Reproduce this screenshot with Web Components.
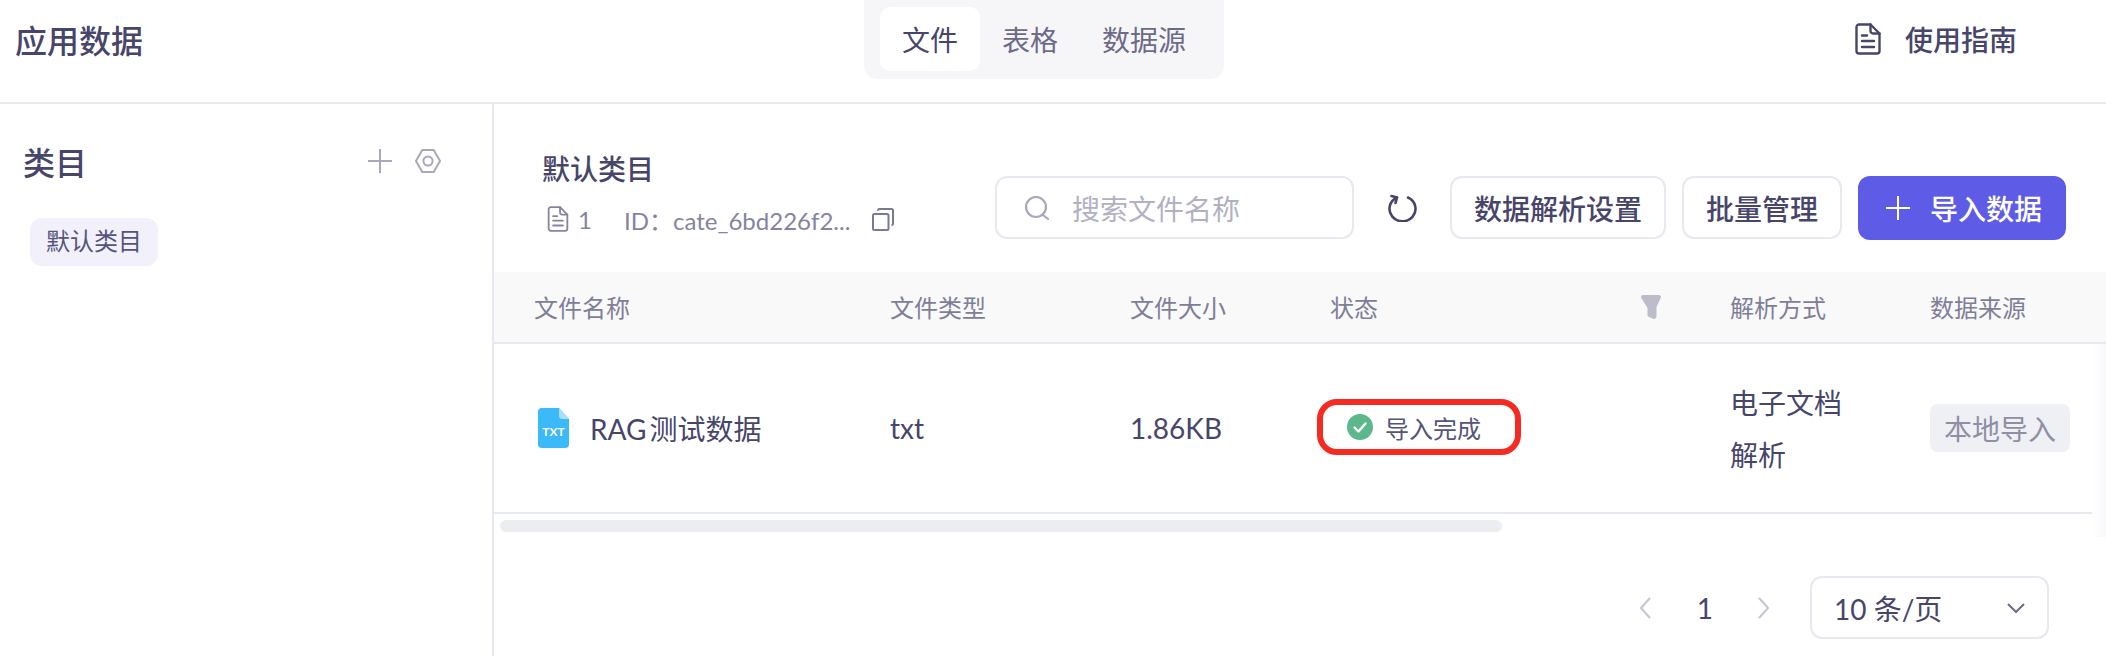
<!DOCTYPE html>
<html lang="zh"><head><meta charset="utf-8"><title>应用数据</title>
<style>
html,body{margin:0;padding:0;background:#fff;}
body{width:2106px;height:656px;overflow:hidden;font-family:Lato,"Noto Sans CJK SC",sans-serif;color:#47466a;}
</style></head><body>
<app-page></app-page>
<script>
const FONT='Lato,"Noto Sans CJK SC",sans-serif';
const docIcon=(w,h,c,sw)=>`<svg width="${w}" height="${h}" viewBox="0 0 26 32" fill="none" stroke="${c}" stroke-width="${sw}" stroke-linejoin="round" stroke-linecap="round"><path d="M4 1.5h11.5L24.5 10.5V28a2.5 2.5 0 0 1-2.5 2.5H4A2.5 2.5 0 0 1 1.5 28V4A2.5 2.5 0 0 1 4 1.5Z"/><path d="M15.5 1.5V8a2.5 2.5 0 0 0 2.5 2.5h6.5"/><path d="M7 12.5h5M7 18h12M7 24h12"/></svg>`;
const plusIcon=(c)=>`<svg width="24" height="24" viewBox="0 0 24 24" stroke="${c}" stroke-width="2" fill="none"><path d="M12 0v24M0 12h24"/></svg>`;
function def(name,html){
  customElements.define(name,class extends HTMLElement{
    constructor(){super();const r=this.attachShadow({mode:'open'});r.innerHTML=html;}
  });
}
def('seg-tabs',`<style>
:host{display:flex;height:79px;box-sizing:border-box;padding:7px 16px 8px;background:#f6f6f9;border-radius:0 0 14px 14px;font-size:28px;color:#6b6a88;}
span{display:flex;align-items:center;padding:0 22px;height:64px;}
.on{background:#fff;border-radius:10px;color:#47466a;}
</style><span class="on">文件</span><span>表格</span><span>数据源</span>`);
def('app-header',`<style>
:host{display:grid;grid-template-columns:864px 360px 1fr;height:102px;border-bottom:2px solid #e8e8f0;}
h1{margin:0;padding-left:15px;font-size:32px;font-weight:500;height:81px;line-height:81px;color:#47466a;}
.g{display:flex;justify-content:flex-end;align-items:center;gap:24px;height:78px;padding-right:89px;font-size:28px;font-weight:500;color:#47466a;}
</style><h1>应用数据</h1><seg-tabs></seg-tabs><div class="g">${docIcon(26,32,'#47466a',2.4)}<span>使用指南</span></div>`);
def('cat-sidebar',`<style>
:host{display:block;width:492px;border-right:2px solid #e8e8f0;box-sizing:content-box;}
.h{display:flex;align-items:center;height:46px;margin-top:34px;padding:0 51px 0 23px;}
h2{margin:0;font-size:32px;font-weight:500;flex:1;color:#47466a;}
.i{display:flex;gap:23px;align-items:center;}
.chip{display:inline-flex;align-items:center;box-sizing:border-box;height:48px;margin:34px 0 0 30px;padding:0 16px 5px;background:#f1f0fb;border-radius:12px;font-size:24px;color:#55547a;}
svg{display:block;}
</style><div class="h"><h2>类目</h2><div class="i">${plusIcon('#a9a8ba')}<svg width="26" height="24" viewBox="0 0 26 24" fill="none" stroke="#a9a8ba" stroke-width="2"><path d="M7.3 1h11.4L25 12l-6.3 11H7.3L1 12Z" stroke-linejoin="round"/><circle cx="13" cy="12" r="4.6"/></svg></div></div><div class="chip">默认类目</div>`);
def('tool-bar',`<style>
:host{display:flex;height:168px;box-sizing:border-box;padding:0 40px 0 48px;}
.l{flex:1;min-width:0;}
h3{margin:0;padding-top:47px;font-size:28px;font-weight:500;line-height:36px;height:36px;color:#47466a;}
.m{display:flex;align-items:center;height:28px;margin-top:18px;padding-left:5px;font-size:24px;color:#85849f;white-space:nowrap;}
.m .n{margin-left:9px;width:46px;}
.m .c{margin-left:22px;}
.r{display:flex;align-items:flex-start;padding-top:72px;}
.s{display:flex;align-items:center;box-sizing:border-box;width:359px;height:63px;border:2px solid #e8e8f0;border-radius:12px;padding-left:27px;font-size:28px;color:#b2b1c3;margin-right:33px;}
.s svg{margin-right:22px;}
.rf{margin:18px 33px 0 0;display:block;}
.b{display:flex;align-items:center;box-sizing:border-box;height:63px;border:2px solid #e8e8f0;border-radius:12px;padding:0 22px;font-size:28px;font-weight:500;color:#47466a;margin-right:16px;}
.p{background:#5e5ce6;border-color:#5e5ce6;color:#fff;margin:0;padding:0 22px 0 26px;height:64px;gap:20px;}
svg{display:block;flex:none;}
</style>
<div class="l"><h3>默认类目</h3><div class="m">${docIcon(22,26,'#85849f',2.2)}<span class="n">1</span><span>ID：cate_6bd226f2...</span><svg class="c" width="22" height="23" viewBox="0 0 22 23" fill="none" stroke="#7a7995" stroke-width="2"><rect x="1" y="6" width="15.5" height="16" rx="1.5"/><path d="M6 2.8V2.5A1.5 1.5 0 0 1 7.5 1h12A1.5 1.5 0 0 1 21 2.5v13a1.5 1.5 0 0 1-1.5 1.5"/></svg></div></div>
<div class="r"><div class="s"><svg width="26" height="24" viewBox="0 0 26 24" fill="none" stroke="#a9a8ba" stroke-width="2.2" stroke-linecap="round"><circle cx="12" cy="11" r="10"/><path d="M19 19l5 4"/></svg><span>搜索文件名称</span></div>
<svg class="rf" width="30" height="28" viewBox="0 0 30 28" fill="none" stroke="#47466a" stroke-width="2.6" stroke-linecap="round" stroke-linejoin="round"><path d="M10 3.5A13 12.5 0 1 0 21 3.5"/><path d="M4.5 2 10 3.5 8.5 9"/></svg>
<div class="b">数据解析设置</div><div class="b">批量管理</div><div class="b p">${plusIcon('#fff')}<span>导入数据</span></div></div>`);
def('status-pill',`<style>
:host{display:inline-flex;align-items:center;gap:12px;font-size:24px;color:#55547a;}
svg{display:block;}
</style><svg width="26" height="26" viewBox="0 0 26 26"><circle cx="13" cy="13" r="13" fill="#5cb88a"/><path d="M7.5 13.5l4 4 7-8" fill="none" stroke="#fff" stroke-width="2.4" stroke-linecap="round" stroke-linejoin="round"/></svg><slot></slot>`);
def('file-table',`<style>
:host{display:block;position:relative;}
.g{display:grid;grid-template-columns:396px 240px 200px 400px 200px 176px;}
.hd{height:70px;background:#f9f9fa;border-bottom:2px solid #e8e8f0;align-items:center;font-size:24px;color:#7f7e98;}
.hd>*:first-child{padding-left:40px;}
.hd>div{margin-top:-1px;}
.st{display:flex;justify-content:space-between;align-items:center;padding-right:69px;}
.rw{height:168px;width:1598px;border-bottom:2px solid #e8e8f0;align-items:center;font-size:28px;color:#47466a;}
.nm{display:flex;align-items:center;gap:21px;padding-left:44px;word-spacing:-4px;}
.ps{line-height:52px;width:120px;padding-top:1px;}
.tag{display:inline-flex;align-items:center;height:48px;padding:0 14px;background:#eff0f3;border-radius:8px;color:#8f8ea5;white-space:nowrap;}
.sb{height:12px;width:1002px;margin:6px 0 0 6px;background:#ecedf1;border-radius:6px;}
.mark{position:absolute;left:823px;top:127px;width:204px;height:56px;box-sizing:border-box;border:6px solid #f52a20;border-radius:20px;}
.shade{position:absolute;right:0;top:72px;height:193px;width:14px;background:linear-gradient(to right,#fff,#f8f8fa);}
.txt{display:block;flex:none;}
.bdg{font:700 12px ${FONT};fill:#fff;}
</style>
<div class="g hd"><div>文件名称</div><div>文件类型</div><div>文件大小</div><div class="st"><span>状态</span><svg width="20" height="24" viewBox="0 0 20 24"><path d="M2 0h16a2 2 0 0 1 1.7 3L15.500 12v9.500a2.500 2.500 0 0 1-3.300 2.300L8 22c-1-.5-1.500-1-1.500-2V13L.3 3A2 2 0 0 1 2 0Z" fill="#bdbccb"/></svg></div><div>解析方式</div><div>数据来源</div></div>
<div class="g rw"><div class="nm"><svg class="txt" width="31" height="40" viewBox="0 0 31 40"><path d="M4 0h17l10 11v25a4 4 0 0 1-4 4H4a4 4 0 0 1-4-4V4a4 4 0 0 1 4-4Z" fill="#3bb9f8"/><path d="M21 0l10 11h-7a3 3 0 0 1-3-3Z" fill="#a9dffb"/><text class="bdg" x="15.5" y="27.500" text-anchor="middle">TXT</text></svg><span>RAG 测试数据</span></div><div>txt</div><div>1.86KB</div><div style="padding-left:17px"><status-pill>导入完成</status-pill></div><div class="ps">电子文档解析</div><div><span class="tag">本地导入</span></div></div>
<div class="sb"></div><div class="mark"></div><div class="shade"></div>`);
def('pager-bar',`<style>
:host{display:flex;justify-content:flex-end;align-items:center;height:63px;margin-top:44px;padding-right:57px;font-size:28px;color:#47466a;}
svg{display:block;}
.n{margin:0 45px 0 46px;}
.sel{display:flex;align-items:center;box-sizing:border-box;width:239px;height:63px;margin-left:41px;padding:0 22px 0 22px;border:2px solid #e8e8f0;border-radius:12px;justify-content:space-between;}
</style><svg width="11" height="22" viewBox="0 0 11 22" fill="none" stroke="#c6c5d3" stroke-width="2"><path d="M10 1 1 11l9 10"/></svg><span class="n">1</span><svg width="11" height="22" viewBox="0 0 11 22" fill="none" stroke="#c6c5d3" stroke-width="2"><path d="M1 1l9 10-9 10"/></svg><div class="sel"><span>10 条/页</span><svg width="18" height="10" viewBox="0 0 18 10" fill="none" stroke="#6b6a88" stroke-width="2"><path d="M1 1l8 8 8-8"/></svg></div>`);
def('data-panel',`<style>:host{display:block;flex:1;min-width:0;}</style><tool-bar></tool-bar><file-table></file-table><pager-bar></pager-bar>`);
def('app-page',`<style>
:host{display:block;width:2106px;height:656px;overflow:hidden;font-family:${FONT};color:#47466a;}
.b{display:flex;height:552px;}
</style><app-header></app-header><div class="b"><cat-sidebar></cat-sidebar><data-panel></data-panel></div>`);
</script></body></html>
